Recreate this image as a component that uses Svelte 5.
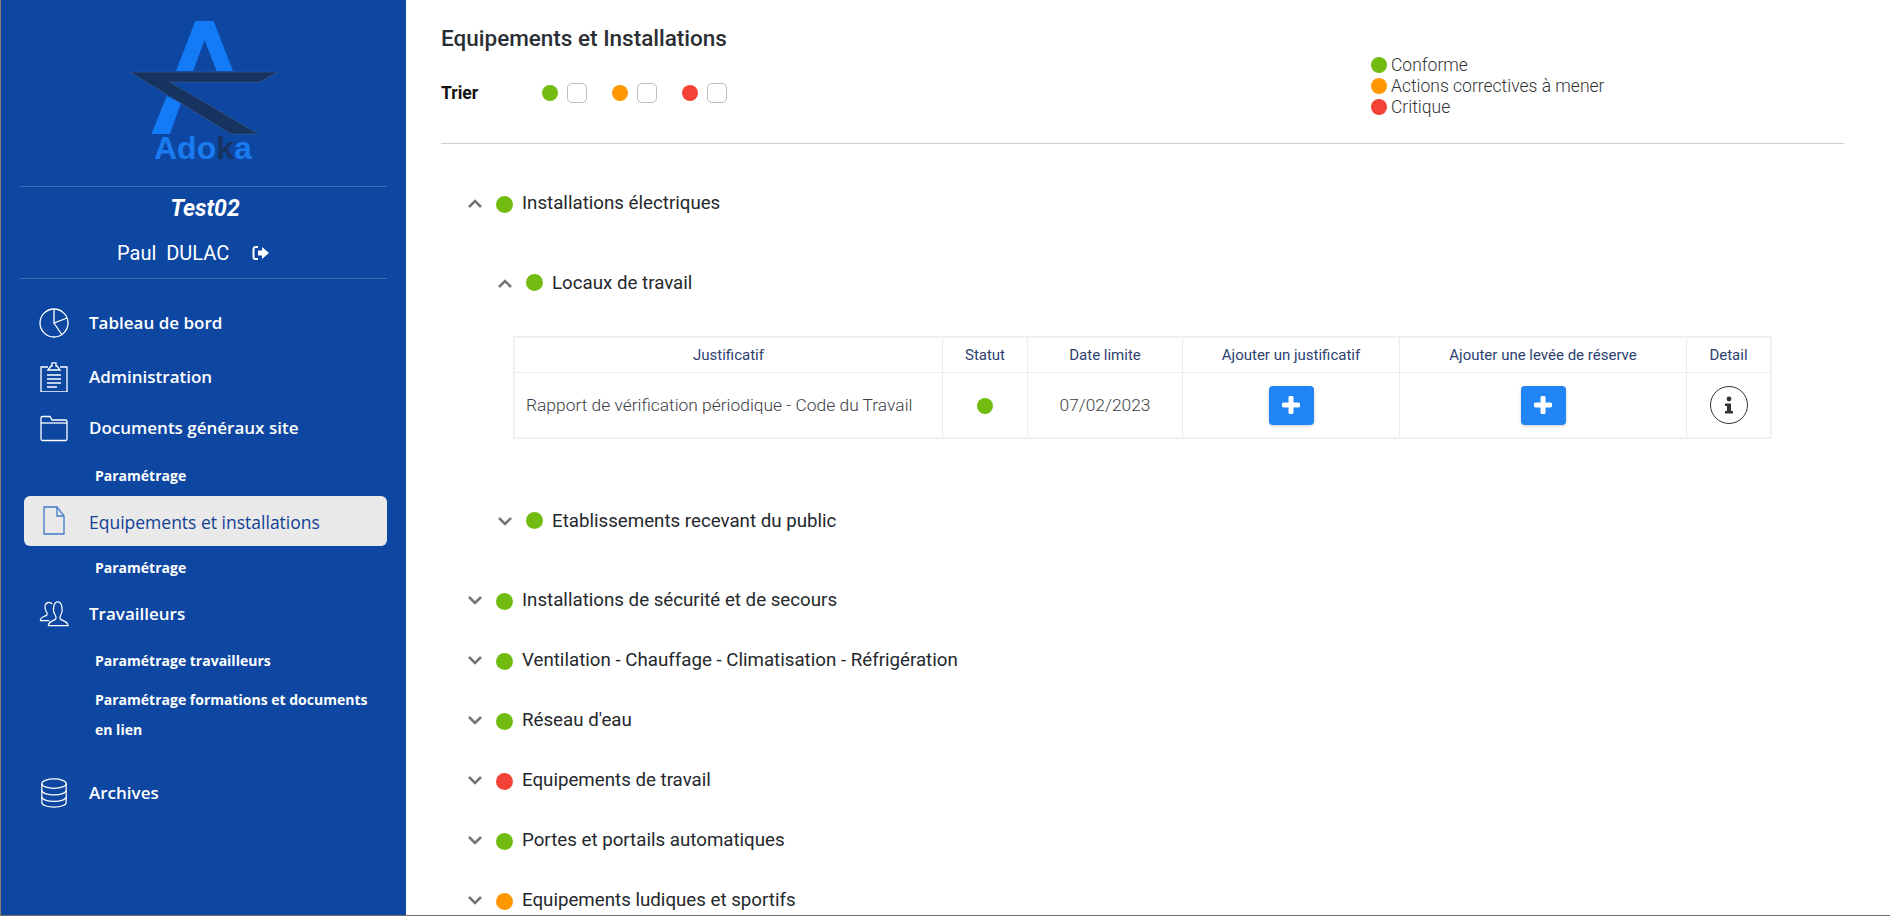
<script>
  const tops = [
    { name: 'Installations de sécurité et de secours', c: 'green' },
    { name: 'Ventilation - Chauffage - Climatisation - Réfrigération', c: 'green' },
    { name: "Réseau d'eau", c: 'green' },
    { name: 'Equipements de travail', c: 'red' },
    { name: 'Portes et portails automatiques', c: 'green' },
    { name: 'Equipements ludiques et sportifs', c: 'orange' }
  ];
</script>

<div class="frame">
  <aside class="side">
    <div class="logo">
      <svg width="152" height="150" viewBox="130 20 152 150">
        <path d="M196.300 21H214.600L234 71H217.700L205.500 40L194.200 71H177Z" fill="#127bf5" />
        <path d="M167.700 96L182 103L170.800 134H152.400Z" fill="#127bf5" />
        <path d="M131 72H278.900L260.500 82H170.800L259.500 134H232Z" fill="#17335f" stroke="#3c5c8f" stroke-width="0.6" />
        <text x="155" y="159" class="adoka">Ado<tspan fill="#17335f">k</tspan>a</text>
      </svg>
    </div>
    <hr class="rule" />
    <div class="site">Test02</div>
    <div class="user">
      <span class="uname">Paul&nbsp; DULAC</span>
      <svg width="18" height="16" viewBox="0 0 18 16">
        <path d="M6 2H3.5A2 2 0 0 0 1.500 4V12A2 2 0 0 0 3.500 14H6" fill="none" stroke="#fff" stroke-width="2" />
        <path d="M6 5.500H10V2L17 8L10 14V10.500H6Z" fill="#fff" />
      </svg>
    </div>
    <hr class="rule" />

    <nav class="menu">
      <a class="item m19">
        <svg class="ico" viewBox="0 0 30 30"><circle cx="15" cy="15" r="14" /><path d="M15 1V15L28 10M15 15L23 27" /></svg>
        <span>Tableau de bord</span>
      </a>
      <a class="item m4">
        <svg class="ico" viewBox="0 0 30 30"><path d="M9 5H2V30H28V5H21" /><path d="M9 8L12 4H13V0.800H17V4H18L21 8Z" /><path d="M8 13H22M8 17H22M8 21H22M8 25H18" /></svg>
        <span>Administration</span>
      </a>
      <a class="item m1">
        <svg class="ico" viewBox="0 0 30 30"><path d="M2 5V26A1.500 1.500 0 0 0 3.500 27.500H26.500A1.500 1.500 0 0 0 28 26V8.500A1.500 1.500 0 0 0 26.500 7H13L11 3.500H3.500A1.500 1.500 0 0 0 2 5Z" /><path d="M2 10H28" /></svg>
        <span>Documents généraux site</span>
      </a>
      <a class="sub m8">Paramétrage</a>
      <a class="item active m5">
        <svg class="ico" viewBox="0 0 30 30"><path d="M5 1H18L25 10V28H5Z" /><path d="M18 1V10H25" /></svg>
        <span>Equipements et installations</span>
      </a>
      <a class="sub m7">Paramétrage</a>
      <a class="item m6">
        <svg class="ico" viewBox="0 0 32 30"><path d="M11 22H1.500C1.500 18 5 18 8 16.500C9 16 9 14 7.500 12C5 8 6.500 2.500 10.500 2.500C12 2.500 13 3 14 4.500" /><path d="M10 27.500H31C31 23 27 23 23.500 21C22 20 22 18 23.500 15.500C26 11 24.500 2 20 2C15.500 2 14 11 17 15.500C18.500 18 18.500 20 17 21C14 23 10 23 10 27.500Z" /></svg>
        <span>Travailleurs</span>
      </a>
      <a class="sub m7">Paramétrage travailleurs</a>
      <a class="sub m9 multi">Paramétrage formations et documents en lien</a>
      <a class="item m23">
        <svg class="ico" viewBox="0 0 30 32"><ellipse cx="15" cy="6" rx="13" ry="5" /><path d="M2 6V26C2 29 8 31 15 31S28 29 28 26V6" /><path d="M2 13C2 16 8 18 15 18S28 16 28 13M2 20C2 23 8 25 15 25S28 23 28 20" /></svg>
        <span>Archives</span>
      </a>
    </nav>
  </aside>

  <main class="main">
    <header class="head">
      <div class="head-left">
        <h1>Equipements et Installations</h1>
        <div class="sort">
          <strong>Trier</strong>
          <span class="dot green"></span><span class="box"></span>
          <span class="dot orange"></span><span class="box"></span>
          <span class="dot red"></span><span class="box"></span>
        </div>
      </div>
      <ul class="legend">
        <li><span class="dot green"></span>Conforme</li>
        <li><span class="dot orange"></span>Actions correctives à mener</li>
        <li><span class="dot red"></span>Critique</li>
      </ul>
    </header>

    <section class="tree">
      <div class="row first">
        <svg class="chev" viewBox="0 0 14 9"><path d="M1 8L7 2L13 8" /></svg>
        <span class="dot green low"></span>
        <span class="label">Installations électriques</span>
      </div>
      <div class="row nested second">
        <svg class="chev" viewBox="0 0 14 9"><path d="M1 8L7 2L13 8" /></svg>
        <span class="dot green high"></span>
        <span class="label">Locaux de travail</span>
      </div>

      <table>
        <thead>
          <tr>
            <th class="c1">Justificatif</th>
            <th class="c2">Statut</th>
            <th class="c3">Date limite</th>
            <th class="c4">Ajouter un justificatif</th>
            <th class="c5">Ajouter une levée de réserve</th>
            <th class="c6">Detail</th>
          </tr>
        </thead>
        <tbody>
          <tr>
            <td class="left">Rapport de vérification périodique - Code du Travail</td>
            <td><span class="dot green"></span></td>
            <td>07/02/2023</td>
            <td><button aria-label="Ajouter un justificatif"><svg viewBox="0 0 18 18" width="18" height="18"><path d="M9 2V16M2 9H16" /></svg></button></td>
            <td><button aria-label="Ajouter une levée de réserve"><svg viewBox="0 0 18 18" width="18" height="18"><path d="M9 2V16M2 9H16" /></svg></button></td>
            <td>
              <span class="info">
                <svg viewBox="0 0 10 18" width="10" height="18"><circle cx="5" cy="3" r="2.400" /><path d="M1 7.500H7V15H9V17.500H1V15H3V10H1Z" /></svg>
              </span>
            </td>
          </tr>
        </tbody>
      </table>

      <div class="row nested third">
        <svg class="chev" viewBox="0 0 14 9"><path d="M1 1L7 7L13 1" /></svg>
        <span class="dot green high"></span>
        <span class="label">Etablissements recevant du public</span>
      </div>

      <div class="list">
        {#each tops as t}
          <div class="row">
            <svg class="chev" viewBox="0 0 14 9"><path d="M1 1L7 7L13 1" /></svg>
            <span class="dot low {t.c}"></span>
            <span class="label">{t.name}</span>
          </div>
        {/each}
      </div>
    </section>
  </main>
</div>

<style>
  :global(body) { margin: 0; background: #fff; }
  .frame {
    display: flex;
    height: 916px;
    overflow: hidden;
    box-sizing: border-box;
    border-left: 1px solid #8a8170;
    border-bottom: 1px solid #6f6f6f;
    font-family: Roboto, sans-serif;
  }
  .side {
    width: 405px;
    flex: none;
    background: #0d47a1;
    color: #fff;
  }
  .logo { height: 186px; padding: 20px 0 0 128px; box-sizing: border-box; }
  .logo svg { display: block; }
  .adoka { font: bold 32px "Liberation Sans", sans-serif; fill: #1a7bf0; }
  .rule { margin: 0 19px; border: 0; border-top: 1px solid #3f6db3; }
  .site { text-align: center; font-size: 23px; font-weight: 700; font-style: italic; height: 44px; line-height: 44px; padding-left: 3px; }
  .user { height: 47px; display: flex; align-items: center; gap: 23px; font-size: 20px; padding-left: 116px; padding-bottom: 4px; box-sizing: border-box; }
  .menu { display: flex; flex-direction: column; padding: 0 19px 0 23px; }
  .item {
    display: flex; align-items: center; height: 50px;
    font: 600 17px/50px "Open Sans", sans-serif; color: #fff;
    padding-left: 15px;
  }
  .ico { width: 30px; height: 30px; flex: none; margin-right: 20px; fill: none; stroke: #fff; stroke-width: 1.3; }
  .active { background: #e9e9e9; color: #123f94; border-radius: 6px; font-weight: 400; font-size: 17.500px; }
  .active span { padding-top: 2px; }
  .active .ico { stroke: #3f7ac8; }
  .sub { font: 700 14px/30px "Open Sans", sans-serif; color: #fff; padding-left: 71px; display: block; height: 30px; }
  .multi { height: 60px; width: 285px; }
  .m1 { margin-top: 1px; } .m4 { margin-top: 4px; } .m5 { margin-top: 5px; } .m6 { margin-top: 6px; }
  .m7 { margin-top: 7px; } .m8 { margin-top: 8px; } .m9 { margin-top: 9px; } .m19 { margin-top: 19px; } .m23 { margin-top: 23px; }

  .main { flex: 1; padding: 0 46px 0 35px; color: #212529; min-width: 0; }
  .head { display: flex; height: 143px; border-bottom: 1px solid #cfcfcf; }
  .head-left { width: 930px; flex: none; }
  h1 { margin: 0; padding-top: 24px; font-size: 22.500px; font-weight: 500; line-height: 28px; color: #2b2f33; }
  .sort { display: flex; align-items: center; margin-top: 31px; height: 20px; }
  .sort strong { width: 101px; font-size: 17.500px; font-weight: 700; color: #111; }
  .sort .dot { margin-right: 9px; }
  .box { width: 20px; height: 20px; box-sizing: border-box; border: 1px solid #b9bcc0; border-radius: 5px; margin-right: 25px; }
  .dot { display: inline-block; width: 16px; height: 16px; border-radius: 50%; flex: none; }
  .green { background: #72bc12; }
  .orange { background: #ff9800; }
  .red { background: #f44336; }
  .legend { list-style: none; margin: 54px 0 0; padding: 0; font-size: 17.500px; font-weight: 300; color: #333; }
  .legend li { display: flex; align-items: center; gap: 4px; height: 21px; }

  .row { display: flex; align-items: center; height: 30px; font-size: 18.720px; padding-left: 27px; }
  .row .dot { width: 17px; height: 17px; }
  .chev { width: 14px; height: 9px; fill: none; stroke: #757575; stroke-width: 2.500; margin-right: 14px; flex: none; }
  .label { margin-left: 9px; color: #24282c; }
  .low { transform: translateY(1px); }
  .high { transform: translateY(-1px); }
  .first { margin-top: 44px; }
  .nested { padding-left: 57px; }
  .second { margin-top: 50px; }
  .third { margin-top: 67px; }
  .list { display: flex; flex-direction: column; gap: 30px; margin-top: 49px; }

  table { border-collapse: collapse; margin: 38px 0 0 72px; width: 1259px; table-layout: fixed; border: 2px solid #f0f0f0; }
  th, td { border: 1px solid #ececec; text-align: center; padding: 0; }
  th { height: 34px; font-size: 15px; font-weight: 400; color: #2c4170; }
  td { height: 64px; font-size: 17.400px; font-weight: 300; color: #3c4046; vertical-align: middle; }
  td .dot { vertical-align: middle; }
  .left { text-align: left; padding-left: 11px; white-space: nowrap; }
  .c1 { width: 427px; } .c2 { width: 84px; } .c3 { width: 154px; } .c4 { width: 216px; } .c5 { width: 286px; }
  button {
    width: 45px; height: 39px; border: 0; border-radius: 4px; background: #2185f5;
    box-shadow: 0 1px 3px rgba(0,0,0,.2); padding: 0; display: inline-flex; align-items: center; justify-content: center; vertical-align: middle;
  }
  button path { stroke: #fff; stroke-width: 5; stroke-linecap: round; fill: none; }
  .info {
    display: inline-flex; width: 38px; height: 38px; box-sizing: border-box; border: 1px solid #333; border-radius: 50%;
    align-items: center; justify-content: center; vertical-align: middle;
  }
  .info path, .info circle { fill: #333; }
</style>
